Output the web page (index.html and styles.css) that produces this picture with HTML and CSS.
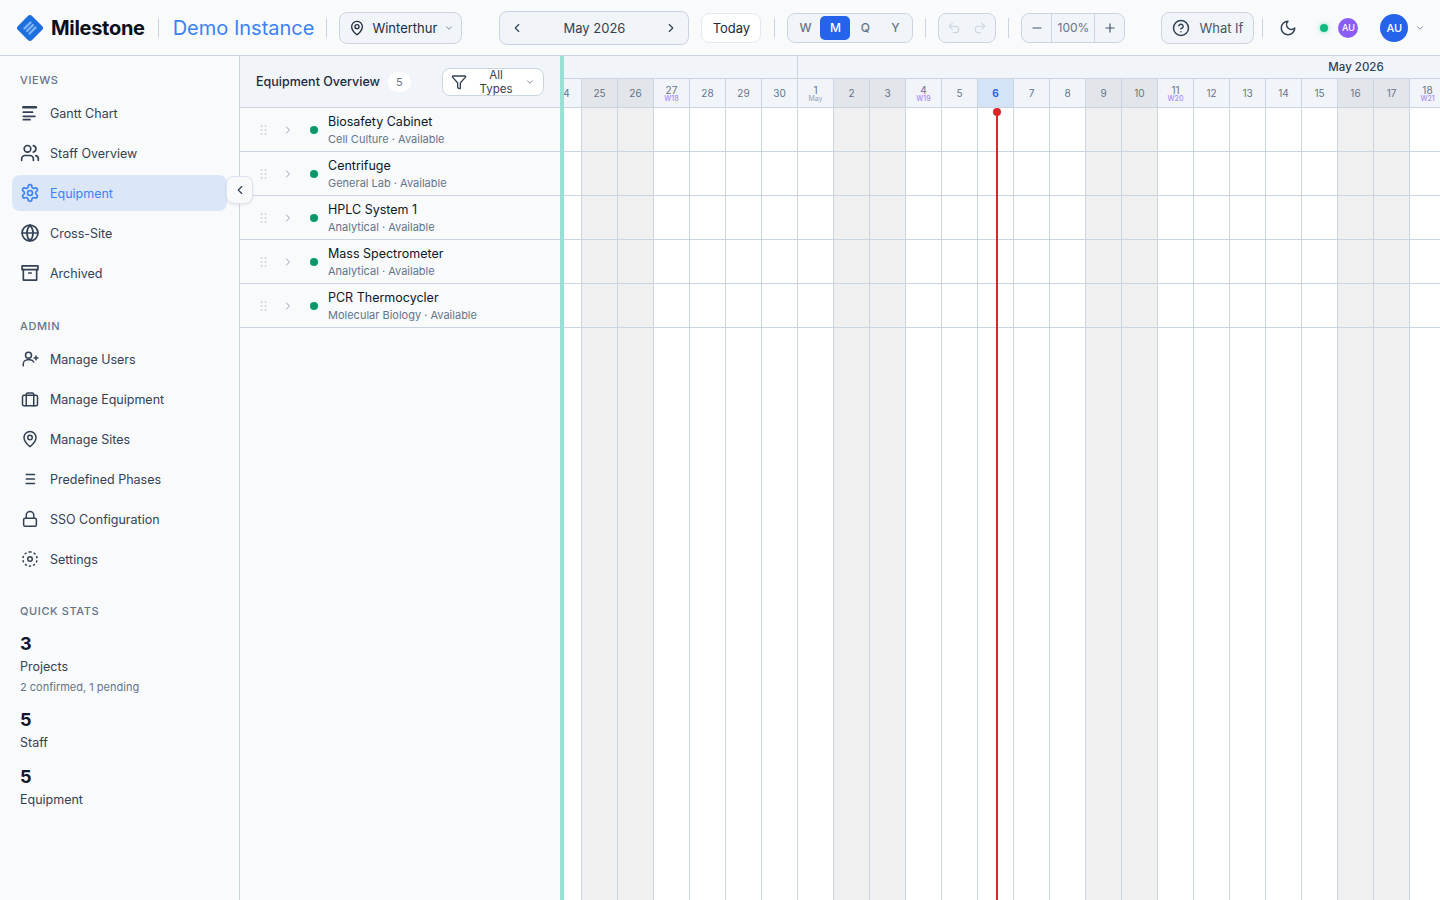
FILE: index.html
```html
<!DOCTYPE html>
<html lang="en">
<head>
  <meta charset="UTF-8">
  <meta name="viewport" content="width=device-width, initial-scale=1.0">
  <title>Milestone - Equipment</title>
  <link rel="stylesheet" href="styles.css">
</head>
<body>

  <!-- Top bar -->
  <header class="topbar">
    <svg class="logo" width="30" height="30" viewBox="0 0 30 30">
      <rect x="5" y="5" width="20" height="20" rx="3" fill="#1d6fe0" transform="rotate(45 15 15)"/>
      <g stroke="#7db4f5" stroke-width="2.4" stroke-linecap="round">
        <path d="M9.5 15.5 15.5 9.5"/>
        <path d="M12 18 18 12"/>
        <path d="M14.5 20.5 20.5 14.5"/>
      </g>
    </svg>
    <span class="brand">Milestone</span>
    <span class="sep sep-brand"></span>
    <span class="instance">Demo Instance</span>
    <span class="sep sep-instance"></span>

    <button class="box site-select">
      <svg class="ico" width="16" height="16" viewBox="0 0 24 24"><path d="M20 10c0 5-5.5 10.2-7.4 11.8a1 1 0 0 1-1.2 0C9.5 20.2 4 15 4 10a8 8 0 0 1 16 0"/><circle cx="12" cy="10" r="3"/></svg>
      <span>Winterthur</span>
      <svg class="ico chev" width="10" height="10" viewBox="0 0 24 24"><path d="m6 9 6 6 6-6"/></svg>
    </button>

    <div class="box month-nav">
      <svg class="ico" width="14" height="14" viewBox="0 0 24 24"><path d="m15 18-6-6 6-6"/></svg>
      <span>May 2026</span>
      <svg class="ico" width="14" height="14" viewBox="0 0 24 24"><path d="m9 18 6-6-6-6"/></svg>
    </div>

    <button class="box today-btn">Today</button>
    <span class="sep sep-today"></span>

    <div class="box range-switch">
      <span class="range">W</span>
      <span class="range active">M</span>
      <span class="range">Q</span>
      <span class="range">Y</span>
    </div>
    <span class="sep sep-range"></span>

    <div class="box history">
      <svg class="ico" width="14" height="14" viewBox="0 0 24 24"><path d="M9 14 4 9l5-5"/><path d="M4 9h10.5a5.5 5.5 0 0 1 5.500 5.500 5.500 5.500 0 0 1-5.500 5.500H11"/></svg>
      <svg class="ico" width="14" height="14" viewBox="0 0 24 24"><path d="m15 14 5-5-5-5"/><path d="M20 9H9.500A5.500 5.500 0 0 0 4 14.500 5.500 5.500 0 0 0 9.500 20H13"/></svg>
    </div>
    <span class="sep sep-history"></span>

    <div class="box zoom-ctrl">
      <span class="zoom-btn"><svg class="ico" width="14" height="14" viewBox="0 0 24 24"><path d="M5 12h14"/></svg></span>
      <span class="zoom-val">100%</span>
      <span class="zoom-btn"><svg class="ico" width="14" height="14" viewBox="0 0 24 24"><path d="M5 12h14"/><path d="M12 5v14"/></svg></span>
    </div>

    <button class="box what-if">
      <svg class="ico" width="18" height="18" viewBox="0 0 24 24"><circle cx="12" cy="12" r="10"/><path d="M9.100 9a3 3 0 0 1 5.800 1c0 2-3 3-3 3"/><path d="M12 17h.01"/></svg>
      <span>What If</span>
    </button>
    <span class="sep sep-whatif"></span>

    <svg class="ico moon" width="18" height="18" viewBox="0 0 24 24"><path d="M12 3a6 6 0 0 0 9 9 9 9 0 1 1-9-9Z"/></svg>
    <span class="presence"></span>
    <span class="avatar avatar-small">AU</span>
    <span class="avatar avatar-main">AU</span>
    <svg class="ico chev user-chev" width="10" height="10" viewBox="0 0 24 24"><path d="m6 9 6 6 6-6"/></svg>
  </header>

  <div class="layout">

    <!-- Sidebar -->
    <aside class="sidebar">
      <button class="collapse-btn">
        <svg class="ico" width="14" height="14" viewBox="0 0 24 24"><path d="m15 18-6-6 6-6"/></svg>
      </button>

      <div class="nav-title">Views</div>
      <nav class="nav-group">
        <a class="nav-item">
          <svg class="ico" width="20" height="20" viewBox="0 0 24 24"><path d="M4 5h15" stroke-width="3"/><path d="M4 11h11"/><path d="M4 16h14"/><path d="M4 20h8"/></svg>
          Gantt Chart
        </a>
        <a class="nav-item">
          <svg class="ico" width="20" height="20" viewBox="0 0 24 24"><path d="M16 21v-2a4 4 0 0 0-4-4H6a4 4 0 0 0-4 4v2"/><circle cx="9" cy="7" r="4"/><path d="M22 21v-2a4 4 0 0 0-3-3.900"/><path d="M16 3.100a4 4 0 0 1 0 7.800"/></svg>
          Staff Overview
        </a>
        <a class="nav-item active">
          <svg class="ico" width="20" height="20" viewBox="0 0 24 24"><path d="M12.200 2h-.4a2 2 0 0 0-2 2v.2a2 2 0 0 1-1 1.700l-.4.300a2 2 0 0 1-2 0l-.2-.1a2 2 0 0 0-2.700.7l-.2.400a2 2 0 0 0 .7 2.700l.2.100a2 2 0 0 1 1 1.700v.5a2 2 0 0 1-1 1.700l-.2.100a2 2 0 0 0-.7 2.700l.2.400a2 2 0 0 0 2.700.7l.2-.1a2 2 0 0 1 2 0l.4.300a2 2 0 0 1 1 1.700v.2a2 2 0 0 0 2 2h.4a2 2 0 0 0 2-2v-.2a2 2 0 0 1 1-1.700l.4-.3a2 2 0 0 1 2 0l.2.100a2 2 0 0 0 2.700-.7l.2-.4a2 2 0 0 0-.7-2.700l-.2-.1a2 2 0 0 1-1-1.700v-.5a2 2 0 0 1 1-1.700l.2-.1a2 2 0 0 0 .7-2.700l-.2-.4a2 2 0 0 0-2.700-.7l-.2.100a2 2 0 0 1-2 0l-.4-.3a2 2 0 0 1-1-1.700V4a2 2 0 0 0-2-2z"/><circle cx="12" cy="12" r="3"/></svg>
          Equipment
        </a>
        <a class="nav-item">
          <svg class="ico" width="20" height="20" viewBox="0 0 24 24"><circle cx="12" cy="12" r="9.500"/><path d="M12 2.500a14 14 0 0 0 0 19 14 14 0 0 0 0-19"/><path d="M2.500 12h19"/></svg>
          Cross-Site
        </a>
        <a class="nav-item">
          <svg class="ico" width="20" height="20" viewBox="0 0 24 24"><path d="M2.500 3.500h19v4.500h-19z"/><path d="M4 8v12.500h16V8"/><path d="M10.500 12h3"/></svg>
          Archived
        </a>
      </nav>

      <div class="nav-title admin-title">Admin</div>
      <nav class="nav-group">
        <a class="nav-item">
          <svg class="ico" width="18" height="18" viewBox="0 0 24 24"><path d="M3 21v-2a6 6 0 0 1 6-6h3a6 6 0 0 1 5 3"/><circle cx="10" cy="7" r="4"/><path d="M20 8v5"/><path d="M17.500 10.500h5"/></svg>
          Manage Users
        </a>
        <a class="nav-item">
          <svg class="ico" width="18" height="18" viewBox="0 0 24 24"><rect x="2" y="7" width="20" height="14" rx="2"/><path d="M7 21V6a2 2 0 0 1 2-2h6a2 2 0 0 1 2 2v15"/></svg>
          Manage Equipment
        </a>
        <a class="nav-item">
          <svg class="ico" width="18" height="18" viewBox="0 0 24 24"><path d="M20 10c0 5-5.500 10.200-7.400 11.800a1 1 0 0 1-1.200 0C9.500 20.200 4 15 4 10a8 8 0 0 1 16 0"/><circle cx="12" cy="10" r="3"/></svg>
          Manage Sites
        </a>
        <a class="nav-item">
          <svg class="ico" width="18" height="18" viewBox="0 0 24 24"><path d="M7 6h11"/><path d="M7 12h11"/><path d="M7 18h11"/></svg>
          Predefined Phases
        </a>
        <a class="nav-item">
          <svg class="ico" width="18" height="18" viewBox="0 0 24 24"><rect x="3.500" y="11" width="17" height="10.500" rx="2"/><path d="M7 11V7a5 5 0 0 1 10 0v4"/></svg>
          SSO Configuration
        </a>
        <a class="nav-item">
          <svg class="ico" width="18" height="18" viewBox="0 0 24 24"><circle cx="12" cy="12" r="3"/><path stroke-dasharray="1.500 4.300" d="M12 2.500a9.500 9.500 0 1 1 0 19 9.500 9.500 0 0 1 0-19"/></svg>
          Settings
        </a>
      </nav>

      <div class="nav-title stats-title">Quick Stats</div>
      <div class="stat">
        <div class="stat-num">3</div>
        <div class="stat-label">Projects</div>
        <div class="stat-note">2 confirmed, 1 pending</div>
      </div>
      <div class="stat">
        <div class="stat-num">5</div>
        <div class="stat-label">Staff</div>
      </div>
      <div class="stat">
        <div class="stat-num">5</div>
        <div class="stat-label">Equipment</div>
      </div>
    </aside>

    <!-- Equipment list -->
    <section class="list-panel">
      <div class="list-head">
        <span class="list-title">Equipment Overview</span>
        <span class="count">5</span>
        <button class="type-filter">
          <svg class="ico" width="16" height="16" viewBox="0 0 24 24"><path d="M10 20a1 1 0 0 0 .55.9l2 1A1 1 0 0 0 14 21v-7a2 2 0 0 1 .52-1.340L21.740 4.670A1 1 0 0 0 21 3H3a1 1 0 0 0-.74 1.670l7.220 7.990A2 2 0 0 1 10 14z"/></svg>
          <span>All Types</span>
          <svg class="ico chev" width="10" height="10" viewBox="0 0 24 24"><path d="m6 9 6 6 6-6"/></svg>
        </button>
      </div>

      <div class="equip-row">
        <svg class="grip" width="8" height="12" viewBox="0 0 8 12"><circle cx="1.500" cy="2" r="1"/><circle cx="5.500" cy="2" r="1"/><circle cx="1.500" cy="6" r="1"/><circle cx="5.500" cy="6" r="1"/><circle cx="1.500" cy="10" r="1"/><circle cx="5.500" cy="10" r="1"/></svg>
        <svg class="ico row-chev" width="12" height="12" viewBox="0 0 24 24"><path d="m9 18 6-6-6-6"/></svg>
        <span class="status-dot"></span>
        <div class="equip-text">
          <div class="equip-name">Biosafety Cabinet</div>
          <div class="equip-meta">Cell Culture · Available</div>
        </div>
      </div>
      <div class="equip-row">
        <svg class="grip" width="8" height="12" viewBox="0 0 8 12"><circle cx="1.500" cy="2" r="1"/><circle cx="5.500" cy="2" r="1"/><circle cx="1.500" cy="6" r="1"/><circle cx="5.500" cy="6" r="1"/><circle cx="1.500" cy="10" r="1"/><circle cx="5.500" cy="10" r="1"/></svg>
        <svg class="ico row-chev" width="12" height="12" viewBox="0 0 24 24"><path d="m9 18 6-6-6-6"/></svg>
        <span class="status-dot"></span>
        <div class="equip-text">
          <div class="equip-name">Centrifuge</div>
          <div class="equip-meta">General Lab · Available</div>
        </div>
      </div>
      <div class="equip-row">
        <svg class="grip" width="8" height="12" viewBox="0 0 8 12"><circle cx="1.500" cy="2" r="1"/><circle cx="5.500" cy="2" r="1"/><circle cx="1.500" cy="6" r="1"/><circle cx="5.500" cy="6" r="1"/><circle cx="1.500" cy="10" r="1"/><circle cx="5.500" cy="10" r="1"/></svg>
        <svg class="ico row-chev" width="12" height="12" viewBox="0 0 24 24"><path d="m9 18 6-6-6-6"/></svg>
        <span class="status-dot"></span>
        <div class="equip-text">
          <div class="equip-name">HPLC System 1</div>
          <div class="equip-meta">Analytical · Available</div>
        </div>
      </div>
      <div class="equip-row">
        <svg class="grip" width="8" height="12" viewBox="0 0 8 12"><circle cx="1.500" cy="2" r="1"/><circle cx="5.500" cy="2" r="1"/><circle cx="1.500" cy="6" r="1"/><circle cx="5.500" cy="6" r="1"/><circle cx="1.500" cy="10" r="1"/><circle cx="5.500" cy="10" r="1"/></svg>
        <svg class="ico row-chev" width="12" height="12" viewBox="0 0 24 24"><path d="m9 18 6-6-6-6"/></svg>
        <span class="status-dot"></span>
        <div class="equip-text">
          <div class="equip-name">Mass Spectrometer</div>
          <div class="equip-meta">Analytical · Available</div>
        </div>
      </div>
      <div class="equip-row">
        <svg class="grip" width="8" height="12" viewBox="0 0 8 12"><circle cx="1.500" cy="2" r="1"/><circle cx="5.500" cy="2" r="1"/><circle cx="1.500" cy="6" r="1"/><circle cx="5.500" cy="6" r="1"/><circle cx="1.500" cy="10" r="1"/><circle cx="5.500" cy="10" r="1"/></svg>
        <svg class="ico row-chev" width="12" height="12" viewBox="0 0 24 24"><path d="m9 18 6-6-6-6"/></svg>
        <span class="status-dot"></span>
        <div class="equip-text">
          <div class="equip-name">PCR Thermocycler</div>
          <div class="equip-meta">Molecular Biology · Available</div>
        </div>
      </div>
    </section>

    <!-- Timeline -->
    <section class="timeline">
      <div class="tl-track">
        <div class="tl-months">
          <div class="tl-month tl-month-apr"></div>
          <div class="tl-month tl-month-may">May 2026</div>
        </div>
        <div class="tl-days">
          <div class="day">24</div>
          <div class="day weekend">25</div>
          <div class="day weekend">26</div>
          <div class="day two-line">27<small class="week">W18</small></div>
          <div class="day">28</div>
          <div class="day">29</div>
          <div class="day">30</div>
          <div class="day two-line">1<small>May</small></div>
          <div class="day weekend">2</div>
          <div class="day weekend">3</div>
          <div class="day two-line">4<small class="week">W19</small></div>
          <div class="day">5</div>
          <div class="day today">6</div>
          <div class="day">7</div>
          <div class="day">8</div>
          <div class="day weekend">9</div>
          <div class="day weekend">10</div>
          <div class="day two-line">11<small class="week">W20</small></div>
          <div class="day">12</div>
          <div class="day">13</div>
          <div class="day">14</div>
          <div class="day">15</div>
          <div class="day weekend">16</div>
          <div class="day weekend">17</div>
          <div class="day two-line">18<small class="week">W21</small></div>
        </div>
        <div class="tl-body">
          <div class="tl-cols">
            <div class="col"></div><div class="col weekend"></div><div class="col weekend"></div>
            <div class="col"></div><div class="col"></div><div class="col"></div><div class="col"></div>
            <div class="col"></div><div class="col weekend"></div><div class="col weekend"></div>
            <div class="col"></div><div class="col"></div><div class="col"></div><div class="col"></div><div class="col"></div>
            <div class="col weekend"></div><div class="col weekend"></div>
            <div class="col"></div><div class="col"></div><div class="col"></div><div class="col"></div><div class="col"></div>
            <div class="col weekend"></div><div class="col weekend"></div>
            <div class="col"></div>
          </div>
          <div class="tl-rows">
            <div class="tl-row"></div>
            <div class="tl-row"></div>
            <div class="tl-row"></div>
            <div class="tl-row"></div>
            <div class="tl-row"></div>
          </div>
          <div class="now-line"></div>
        </div>
      </div>
    </section>

  </div>

</body>
</html>
```

FILE: styles.css
```css
* {
  box-sizing: border-box;
}
html, body {
  height: 100%;
}
body {
  margin: 0;
  font-family: "Inter", "Liberation Sans", sans-serif;
  font-size: 13px;
  color: #1e293b;
  background-color: #f8fafc;
  overflow: hidden;
}
button {
  font: inherit;
  color: inherit;
}
.ico {
  fill: none;
  stroke: currentColor;
  stroke-width: 2;
  stroke-linecap: round;
  stroke-linejoin: round;
  flex-shrink: 0;
}
.chev {
  color: #64748b;
}

/* Top bar */
.topbar {
  display: flex;
  align-items: center;
  height: 56px;
  padding-left: 15px;
  background-color: #f8fafc;
  border-bottom: 1px solid #cbd5e1;
}
.brand {
  margin-left: 6px;
  font-size: 20px;
  font-weight: 700;
  letter-spacing: -0.3px;
  color: #0b0f19;
}
.instance {
  font-size: 20px;
  font-weight: 400;
  color: #3b82f6;
}
.sep {
  width: 1px;
  height: 20px;
  background-color: #cbd5e1;
  flex-shrink: 0;
}
.sep-brand { margin: 0 14px 0 13px; }
.sep-instance { margin: 0 12px 0 12px; }
.sep-today { margin: 0 12px 0 13px; }
.sep-range { margin: 0 12px; }
.sep-history { margin: 0 12px; }
.sep-whatif { margin: 0 16px 0 8px; }

.box {
  display: flex;
  align-items: center;
  background-color: #f1f5f9;
  border: 1px solid #cbd5e1;
  border-radius: 8px;
  flex-shrink: 0;
}
.site-select {
  width: 123px;
  height: 32px;
  padding: 0 9px;
  gap: 7px;
}
.site-select .chev {
  margin-left: auto;
}
.month-nav {
  width: 190px;
  height: 34px;
  margin-left: 37px;
  padding: 0 10px;
  justify-content: space-between;
  color: #334155;
}
.today-btn {
  width: 60px;
  height: 30px;
  margin-left: 12px;
  justify-content: center;
  background-color: #fff;
  border-color: #e2e8f0;
}
.range-switch {
  width: 126px;
  height: 30px;
  padding: 2px;
  color: #64748b;
}
.range {
  flex: 1;
  height: 24px;
  line-height: 24px;
  text-align: center;
  font-size: 12px;
  font-weight: 500;
  border-radius: 5px;
}
.range.active {
  color: #fff;
  background-color: #2563eb;
}
.history {
  width: 58px;
  height: 30px;
  justify-content: space-around;
  padding: 0 2px;
  color: #cbd5e1;
  border-color: #cbd5e1;
}
.zoom-ctrl {
  width: 104px;
  height: 30px;
  color: #475569;
}
.zoom-btn {
  display: flex;
  align-items: center;
  justify-content: center;
  width: 29px;
  height: 100%;
}
.zoom-val {
  flex: 1;
  height: 100%;
  line-height: 28px;
  text-align: center;
  font-size: 12px;
  color: #64748b;
  border-left: 1px solid #cbd5e1;
  border-right: 1px solid #cbd5e1;
}
.what-if {
  width: 93px;
  height: 32px;
  margin-left: 36px;
  justify-content: center;
  gap: 9px;
  color: #475569;
}
.what-if .ico {
  color: #334155;
}
.moon {
  color: #334155;
}
.presence {
  width: 8px;
  height: 8px;
  margin-left: 23px;
  background-color: #10b981;
  border-radius: 50%;
  box-shadow: 0 0 4px #6ee7b7;
}
.avatar {
  display: flex;
  align-items: center;
  justify-content: center;
  border-radius: 50%;
  color: #fff;
  flex-shrink: 0;
}
.avatar-small {
  width: 20px;
  height: 20px;
  margin-left: 10px;
  font-size: 9px;
  font-weight: 500;
  background-color: #8b5cf6;
}
.avatar-main {
  width: 28px;
  height: 28px;
  margin-left: 22px;
  font-size: 11px;
  font-weight: 500;
  background-color: #2563eb;
}
.user-chev {
  margin-left: 7px;
}

/* Main layout */
.layout {
  display: flex;
  height: 844px;
}

/* Sidebar */
.sidebar {
  position: relative;
  width: 240px;
  flex-shrink: 0;
  padding: 16px 12px 0;
  background-color: #f8fafc;
  border-right: 1px solid #cbd5e1;
}
.collapse-btn {
  position: absolute;
  top: 120px;
  left: 226px;
  z-index: 5;
  display: flex;
  align-items: center;
  justify-content: center;
  width: 27px;
  height: 28px;
  padding: 0;
  color: #334155;
  background-color: #f8fafc;
  border: 1px solid #dbe3ee;
  border-radius: 8px;
  box-shadow: 0 1px 3px rgba(0, 0, 0, 0.08);
}
.nav-title {
  padding-left: 8px;
  height: 16px;
  line-height: 16px;
  font-size: 11px;
  font-weight: 500;
  letter-spacing: 0.6px;
  text-transform: uppercase;
  color: #64748b;
}
.admin-title {
  margin-top: 27px;
}
.stats-title {
  margin-top: 26px;
}
.nav-group {
  display: flex;
  flex-direction: column;
  gap: 4px;
  margin-top: 7px;
}
.nav-item {
  display: flex;
  align-items: center;
  height: 36px;
  padding-left: 8px;
  font-size: 12.5px;
  color: #334155;
  border-radius: 8px;
}
.nav-item .ico {
  width: 20px;
  margin-right: 10px;
}
.nav-item.active {
  color: #3b82f6;
  background-color: #dbe7f9;
}

.stat {
  padding-left: 8px;
}
.stat-num {
  margin-top: 14px;
  height: 22px;
  line-height: 22px;
  font-size: 18px;
  font-weight: 700;
  color: #0f172a;
}
.stat-label {
  margin-top: 3px;
  height: 18px;
  line-height: 18px;
  font-size: 12.5px;
  color: #334155;
}
.stat-note {
  margin-top: 3px;
  height: 16px;
  line-height: 16px;
  font-size: 11px;
  color: #64748b;
}

/* Equipment list */
.list-panel {
  width: 320px;
  flex-shrink: 0;
  background-color: #f8fafc;
}
.list-head {
  display: flex;
  align-items: center;
  height: 52px;
  padding: 0 16px;
  background-color: #f1f5f9;
  border-bottom: 1px solid #cbd5e1;
}
.list-title {
  font-size: 12.5px;
  font-weight: 500;
  color: #1e293b;
}
.count {
  width: 23px;
  height: 20px;
  line-height: 20px;
  margin-left: 8px;
  text-align: center;
  font-size: 11px;
  color: #64748b;
  background-color: #fff;
  border-radius: 10px;
}
.type-filter {
  display: flex;
  align-items: center;
  gap: 5px;
  width: 102px;
  height: 28px;
  margin-left: auto;
  padding: 0 8px;
  font-size: 11.5px;
  color: #334155;
  background-color: #fff;
  border: 1px solid #cbd5e1;
  border-radius: 8px;
}
.type-filter .chev {
  margin-left: auto;
}
.equip-row {
  display: flex;
  align-items: center;
  height: 44px;
  padding-left: 20px;
  border-bottom: 1px solid #cbd5e1;
}
.grip {
  fill: #cbd5e1;
  flex-shrink: 0;
}
.row-chev {
  margin-left: 14px;
  color: #94a3b8;
}
.status-dot {
  width: 8px;
  height: 8px;
  margin-left: 16px;
  background-color: #059669;
  border-radius: 50%;
  flex-shrink: 0;
}
.equip-text {
  margin-left: 10px;
}
.equip-name {
  height: 18px;
  line-height: 18px;
  font-size: 12.5px;
  color: #0f172a;
}
.equip-meta {
  height: 16px;
  line-height: 16px;
  font-size: 11px;
  color: #64748b;
}

/* Timeline */
.timeline {
  flex: 1;
  min-width: 0;
  overflow: hidden;
  background-color: #fff;
  border-left: 4px solid #99e1d5;
}
.tl-track {
  display: flex;
  flex-direction: column;
  width: 900px;
  height: 100%;
  margin-left: -18px;
}
.tl-months {
  display: flex;
  flex-shrink: 0;
  height: 23px;
  background-color: #f1f5f9;
  border-bottom: 1px solid #cbd5e1;
}
.tl-month {
  flex-shrink: 0;
  text-align: center;
  line-height: 22px;
  font-size: 11.5px;
  font-weight: 500;
  color: #334155;
}
.tl-month-apr {
  width: 252px;
  border-right: 1px solid #cbd5e1;
}
.tl-month-may {
  width: 1116px;
}
.tl-days {
  display: flex;
  flex-shrink: 0;
  height: 29px;
  background-color: #f1f5f9;
  border-bottom: 1px solid #cbd5e1;
}
.day {
  display: flex;
  flex-direction: column;
  align-items: center;
  justify-content: center;
  width: 36px;
  flex-shrink: 0;
  font-size: 10px;
  line-height: 10px;
  color: #64748b;
  border-right: 1px solid #cbd5e1;
}
.day small {
  font-size: 7px;
  line-height: 7px;
  color: #94a3b8;
}
.day small.week {
  font-weight: 500;
  color: #a78bfa;
}
.day.weekend {
  background-color: #e2e5ea;
}
.day.today {
  font-weight: 700;
  color: #2563eb;
  background-color: #d5e3f7;
}
.tl-body {
  position: relative;
  flex: 1;
}
.tl-cols {
  display: flex;
  height: 100%;
}
.col {
  width: 36px;
  flex-shrink: 0;
  border-right: 1px solid #cbd5e1;
}
.col.weekend {
  background-color: #f0f0f0;
}
.tl-rows {
  position: absolute;
  top: 0;
  left: 0;
  width: 100%;
}
.tl-row {
  height: 44px;
  border-bottom: 1px solid #cbd5e1;
}
.now-line {
  position: absolute;
  top: 4px;
  bottom: 0;
  left: 450px;
  width: 2px;
  background-color: #dc2626;
}
.now-line::before {
  content: "";
  position: absolute;
  top: -4px;
  left: -3px;
  width: 8px;
  height: 8px;
  background-color: #dc2626;
  border-radius: 50%;
}
```
